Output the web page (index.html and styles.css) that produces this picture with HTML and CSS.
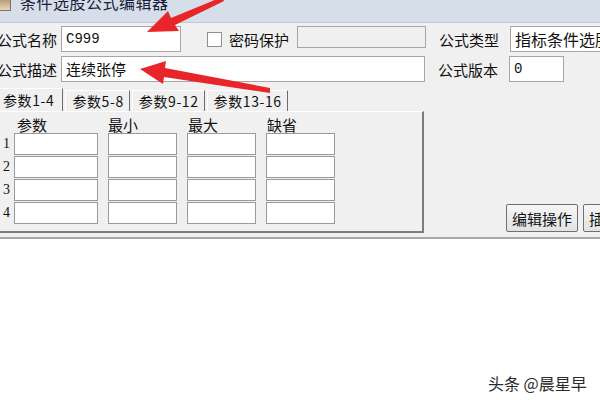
FILE: index.html
```html
<!DOCTYPE html>
<html lang="zh-CN">
<head>
  <meta charset="UTF-8" />
  <title>条件选股公式编辑器</title>
  <link rel="stylesheet" href="styles.css">
</head>
<body>
  <div class="screen">
    <div class="titlebar">
      <span class="app-icon"></span>
      <span class="title">条件选股公式编辑器</span>
    </div>

    <div class="window">
      <div class="form">
        <div class="row">
          <label class="lbl">公式名称</label>
          <div class="field name">C999</div>
          <span class="check"></span>
          <label class="lbl pwd">密码保护</label>
          <div class="field locked"></div>
          <label class="lbl type">公式类型</label>
          <div class="field kind">指标条件选股</div>
        </div>
        <div class="row">
          <label class="lbl">公式描述</label>
          <div class="field desc">连续张停</div>
          <label class="lbl type">公式版本</label>
          <div class="field version">0</div>
        </div>
      </div>

      <div class="lower">
        <div class="tabbox">
          <div class="tabs">
            <span class="tab active">参数1-4</span>
            <span class="tab">参数5-8</span>
            <span class="tab">参数9-12</span>
            <span class="tab">参数13-16</span>
          </div>
          <div class="panel">
            <div class="grid">
              <span></span>
              <span class="head h1">参数</span>
              <span class="head">最小</span>
              <span class="head h3">最大</span>
              <span class="head h3">缺省</span>

              <span class="num">1</span>
              <span class="cell"></span><span class="cell"></span><span class="cell"></span><span class="cell"></span>
              <span class="num">2</span>
              <span class="cell"></span><span class="cell"></span><span class="cell"></span><span class="cell"></span>
              <span class="num">3</span>
              <span class="cell"></span><span class="cell"></span><span class="cell"></span><span class="cell"></span>
              <span class="num">4</span>
              <span class="cell"></span><span class="cell"></span><span class="cell"></span><span class="cell"></span>
            </div>
          </div>
        </div>

        <div class="actions">
          <button class="btn">编辑操作</button>
          <button class="btn">插入函数</button>
        </div>
      </div>
    </div>

    <div class="blank">
      <span class="watermark">头条 @晨星早</span>
    </div>

    <!-- red annotation arrows drawn over the screenshot -->
    <svg class="arrows" width="600" height="400" viewBox="0 0 600 400">
      <polygon points="147,32 168,11 171,18 222,-3 224,1 175,25 179,31" fill="#e8262a"/>
      <polygon points="140,69 166,61 165,68 270,88 270,93 164,77 163,84" fill="#e8262a"/>
    </svg>
  </div>
</body>
</html>
```

FILE: styles.css
```css
body {
  margin: 0;
  font-family: "Noto Sans CJK SC", "Noto Sans", sans-serif;
  color: #111;
}

.screen {
  position: relative;
  width: 600px;
  height: 400px;
  overflow: hidden;
  background: #fff;
}

.titlebar {
  height: 22px;
  background: #d6dee9;
  border-bottom: 1px solid #c3cad4;
  display: flex;
  align-items: flex-start;
  gap: 9px;
  overflow: hidden;
}

.app-icon {
  width: 10px;
  height: 10px;
  background: linear-gradient(#b99a7c, #e8d6c0);
  border-right: 1px solid #8a6f55;
  border-bottom: 1px solid #8a6f55;
}

.title {
  font-size: 16px;
  line-height: 16px;
  margin-top: -6px;
  color: #1b1f3a;
  letter-spacing: 0.5px;
}

.window {
  height: 211px;
  background: #f0f0f0;
  border-bottom: 2px solid #a9a9a9;
  padding-top: 3px;
}

.form {
  margin-left: -3px;
  display: flex;
  flex-direction: column;
  gap: 4px;
}

.row {
  display: flex;
  align-items: center;
  height: 26px;
}

.lbl {
  font-size: 15px;
  width: 64px;
  flex: none;
}

.field {
  box-sizing: border-box;
  height: 26px;
  background: #fff;
  border: 1px solid #a6a6a6;
  font-size: 15px;
  line-height: 24px;
  padding-left: 4px;
  flex: none;
  white-space: nowrap;
  overflow: hidden;
}

.name { width: 120px; font-family: "Liberation Mono", monospace; font-size: 14px; }
.version { width: 55px; font-family: "Liberation Mono", monospace; font-size: 14px; }
.desc { width: 364px; }
.kind { width: 120px; font-size: 16px; }

.check {
  width: 13px;
  height: 13px;
  margin-left: 26px;
  background: #fff;
  border: 1px solid #8e8f8f;
  flex: none;
}

.pwd {
  width: 60px;
  margin-left: 7px;
}

.locked {
  width: 129px;
  height: 22px;
  margin-left: 8px;
  background: #f0f0f0;
  align-self: flex-start;
}

.type {
  width: 60px;
  margin-left: 13px;
  margin-right: 11px;
}

.lower {
  display: flex;
  margin-top: 6px;
  margin-left: -2px;
}

.tabbox {
  width: 426px;
  flex: none;
}

.tabs {
  display: flex;
  height: 23px;
  align-items: flex-end;
}

.tab {
  box-sizing: border-box;
  height: 21px;
  font-size: 14px;
  line-height: 20px;
  letter-spacing: 0.6px;
  padding: 0 5px 0 6px;
  border-top: 1px solid #fff;
  border-left: 1px solid #fff;
  border-right: 1px solid #6e6e6e;
  margin-right: 2px;
  background: #f0f0f0;
}

.tab.active {
  height: 23px;
  line-height: 22px;
  padding: 0 8px 0 4px;
}

.panel {
  box-sizing: border-box;
  height: 122px;
  border-top: 1px solid #fff;
  border-left: 1px solid #fff;
  border-right: 2px solid #7d7d7d;
  border-bottom: 2px solid #7d7d7d;
  padding-top: 5px;
}

.grid {
  display: grid;
  grid-template-columns: 5px 84px 69px 69px 69px;
  grid-template-rows: 15px 22px 22px 22px 22px;
  column-gap: 10px;
  row-gap: 1px;
}

.head {
  font-size: 15px;
  line-height: 15px;
}

.h1 { padding-left: 3px; }
.h3 { padding-left: 1px; }

.num {
  font-family: "Liberation Serif", serif;
  font-size: 14px;
  line-height: 22px;
  margin-left: 4px;
  justify-self: start;
}

.cell {
  background: #fff;
  border: 1px solid #9a9a9a;
}

.actions {
  flex: 1;
  display: flex;
  align-items: flex-end;
  gap: 5px;
  padding-left: 82px;
  padding-bottom: 1px;
  overflow: hidden;
}

.btn {
  box-sizing: border-box;
  flex: none;
  height: 28px;
  padding: 0 5px;
  font-family: "Noto Sans CJK SC", sans-serif;
  font-size: 15px;
  background: linear-gradient(#f6f6f6, #e2e2e2);
  border: 1px solid #707070;
  border-radius: 2px;
  color: #111;
}

.blank {
  position: relative;
  height: 160px;
}

.watermark {
  position: absolute;
  left: 488px;
  top: 132px;
  font-size: 16px;
  color: #2b2b2b;
  text-shadow: 0 0 2px #fff;
}

.arrows {
  position: absolute;
  left: 0;
  top: 0;
  pointer-events: none;
}
```
